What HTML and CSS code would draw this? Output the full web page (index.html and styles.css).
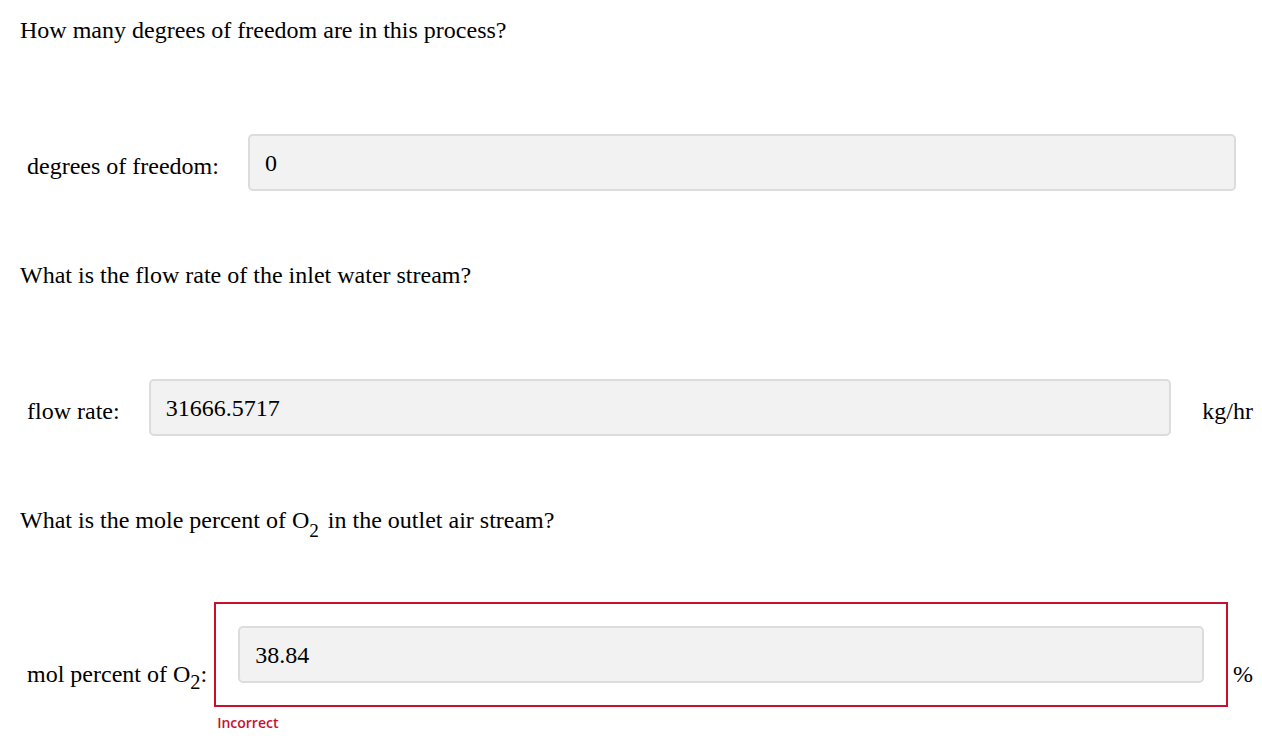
FILE: index.html
```html
<!DOCTYPE html>
<html lang="en">
<head>
<meta charset="utf-8">
<title>Degrees of freedom</title>
<link rel="stylesheet" href="styles.css">
</head>
<body>
<div class="page">
  <p class="q q-first">How many degrees of freedom are in this process?</p>
  <div class="row">
    <div class="label">degrees of freedom:</div>
    <div class="field"><div class="input">0</div></div>
  </div>

  <p class="q">What is the flow rate of the inlet water stream?</p>
  <div class="row">
    <div class="label">flow rate:</div>
    <div class="field"><div class="input">31666.5717</div></div>
    <div class="unit">kg/hr</div>
  </div>

  <p class="q q-math">What is the mole percent of <span class="chem">O<sub class="sub-q">2</sub></span> in the outlet air stream?</p>
  <div class="row row-last">
    <div class="label label-err">mol percent of O<sub class="sub-l">2</sub>:</div>
    <div class="field-col">
      <div class="field field-error"><div class="input">38.84</div></div>
      <div class="error-msg">Incorrect</div>
    </div>
    <div class="unit unit-err">%</div>
  </div>
</div>
</body>
</html>
```

FILE: styles.css
```css
html, body {
  margin: 0;
  padding: 0;
  background: #ffffff;
}

.page {
  padding: 0 2px 0 20px;
  font-family: "Liberation Serif", "Times New Roman", serif;
  font-size: 24px;
  color: #000000;
}

.q {
  margin: 0 0 66px 0;
  line-height: 28px;
}

.q-first {
  padding-top: 16px;
}

.row {
  display: flex;
  align-items: center;
  margin-bottom: 46px;
}

.row-last {
  margin-bottom: 0;
}

.label {
  flex: none;
  padding: 7px 5px 0 7px;
  line-height: 28px;
  white-space: nowrap;
}

.label-err {
  padding-top: 12px;
  padding-right: 7px;
}

.unit {
  flex: none;
  padding: 7px 7px 0 7px;
  line-height: 28px;
  white-space: nowrap;
}

.unit-err {
  padding-top: 12px;
  padding-left: 5px;
}

.field {
  flex: 1;
  padding: 24px;
}

.field-col {
  flex: 1;
  display: flex;
  flex-direction: column;
}

.field-error {
  flex: none;
  padding: 22px;
  border: 2px solid #c8102e;
}

.input {
  box-sizing: border-box;
  height: 57px;
  padding: 0 15px;
  display: flex;
  align-items: center;
  background: #f2f2f2;
  border: 2px solid #dcdcdc;
  border-radius: 5px;
  line-height: 28px;
}

.error-msg {
  font-family: "Open Sans", "Liberation Sans", sans-serif;
  font-weight: 600;
  font-size: 14px;
  line-height: 20px;
  color: #c8102e;
  padding: 6px 0 0 3px;
}

.q-math {
  margin-top: 4px;
  margin-bottom: 68px;
}

.chem {
  margin-right: 3px;
}

.sub-q {
  font-size: 0.8em;
  line-height: 0;
  vertical-align: -0.45em;
}

.sub-l {
  font-size: 0.85em;
  line-height: 0;
  vertical-align: -0.36em;
}
```
